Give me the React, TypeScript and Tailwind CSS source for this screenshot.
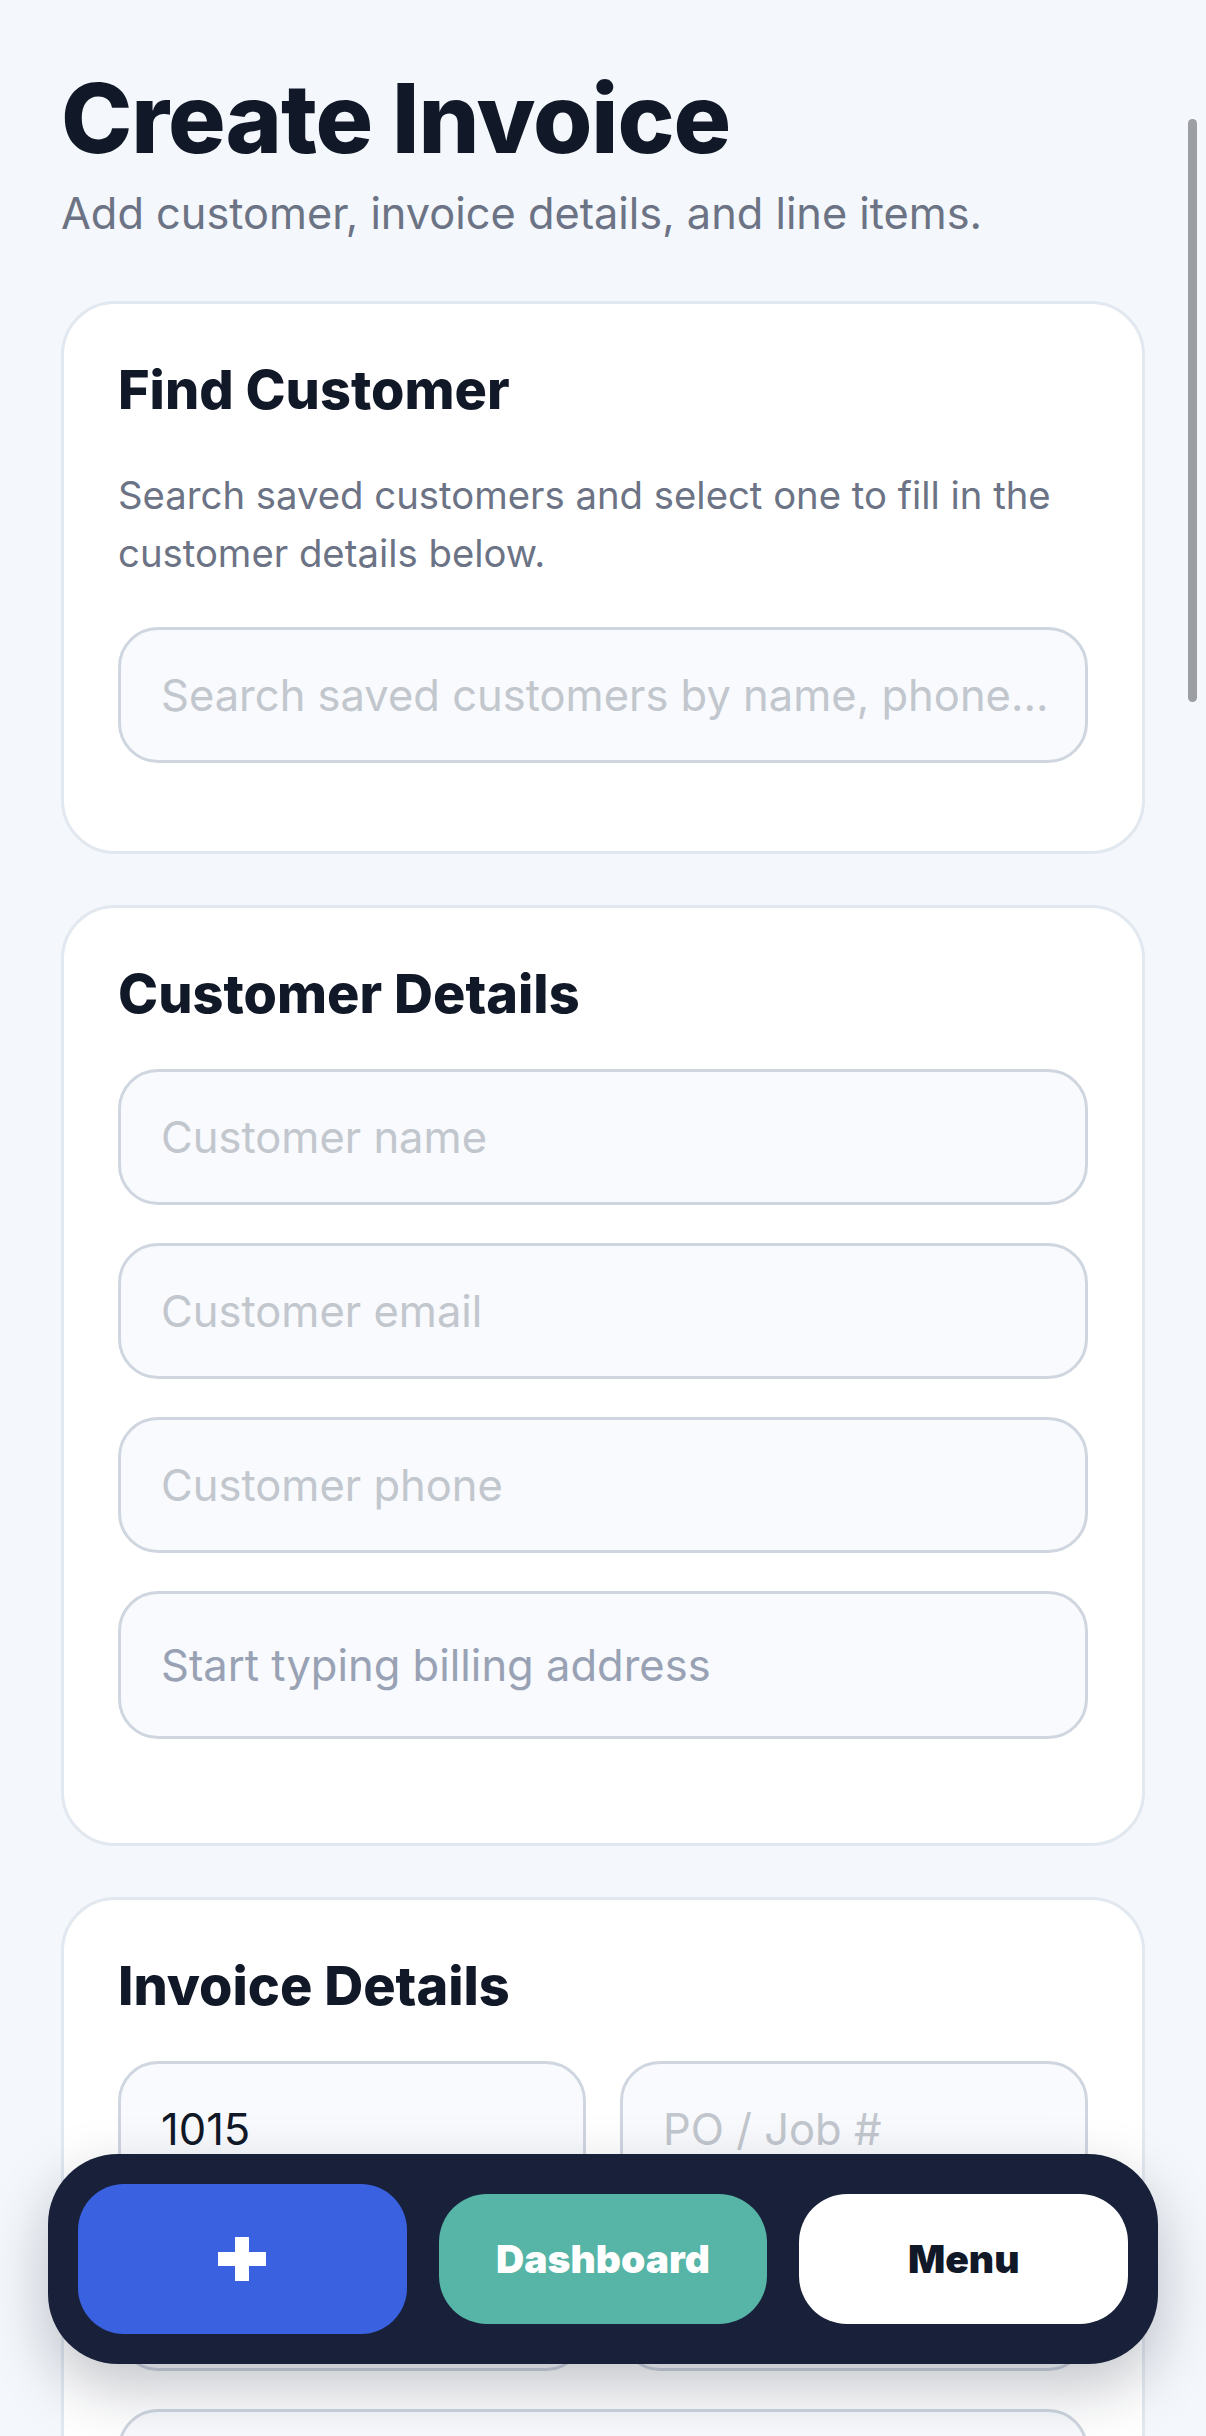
import React from "react";

type FieldProps = {
  placeholder?: string;
  value?: string;
  tall?: boolean;
  dark?: boolean;
};

const Field = ({ placeholder, value, tall, dark }: FieldProps) => (
  <input
    readOnly
    defaultValue={value}
    placeholder={placeholder}
    className={`block w-full ${tall ? "h-[148px]" : "h-[136px]"} rounded-[40px] border-[3px] border-[#cfd6e0] bg-[#f8fafd] pl-[40px] pr-[20px] text-[43.5px] text-[#111827] text-ellipsis outline-none ${
      dark ? "placeholder:text-[#99a2b4]" : "placeholder:text-[#c2c6cd]"
    }`}
  />
);

const Card = ({
  title,
  pb,
  children,
}: {
  title: string;
  pb: string;
  children: React.ReactNode;
}) => (
  <section
    className={`rounded-[54px] border-[3px] border-[#e2e8f0] bg-white px-[54px] pt-[54px] ${pb}`}
  >
    <h2 className="text-[54px] leading-[64px] font-extrabold text-[#111827]">
      {title}
    </h2>
    {children}
  </section>
);

const PlusIcon = () => (
  <svg width="48" height="44" viewBox="0 0 48 44" fill="#ffffff">
    <rect x="0" y="15" width="48" height="14" />
    <rect x="17" y="0" width="14" height="44" />
  </svg>
);

const BottomNav = () => (
  <nav className="absolute bottom-[72px] left-[48px] right-[48px] flex h-[210px] items-center gap-[32px] rounded-[70px] bg-[#19213a] px-[30px] shadow-[0_24px_60px_rgba(15,23,42,0.25)]">
    <button className="flex h-[150px] flex-1 items-center justify-center rounded-[46px] bg-[#3961e0]">
      <PlusIcon />
    </button>
    <button className="flex h-[130px] flex-1 items-center justify-center rounded-[48px] bg-[#56b5a6] text-[39px] font-black text-white">
      Dashboard
    </button>
    <button className="flex h-[130px] flex-1 items-center justify-center rounded-[48px] bg-white text-[39px] font-black text-[#111827]">
      Menu
    </button>
  </nav>
);

export default function App() {
  return (
    <div className="relative h-[2436px] overflow-hidden bg-[#f4f7fb] font-['Inter','Noto_Sans',sans-serif]">
      <main className="px-[61px] pt-[60px]">
        <h1 className="text-[96px] leading-[116px] font-extrabold tracking-[-0.011em] text-[#111827]">
          Create Invoice
        </h1>
        <p className="mt-[5px] text-[43.3px] leading-[64px] text-[#6b7385]">
          Add customer, invoice details, and line items.
        </p>

        <div className="mt-[56px] flex flex-col gap-[51px]">
          <Card title="Find Customer" pb="pb-[88px]">
            <p className="mt-[44px] text-[38.3px] leading-[58px] text-[#6b7385]">
              Search saved customers and select one to fill in the customer
              details below.
            </p>
            <div className="mt-[45px]">
              <Field placeholder="Search saved customers by name, phone..." />
            </div>
          </Card>

          <Card title="Customer Details" pb="pb-[104px]">
            <div className="mt-[43px] flex flex-col gap-[38px]">
              <Field placeholder="Customer name" />
              <Field placeholder="Customer email" />
              <Field placeholder="Customer phone" />
              <Field placeholder="Start typing billing address" tall dark />
            </div>
          </Card>

          <Card title="Invoice Details" pb="pb-[104px]">
            <div className="mt-[43px] grid grid-cols-2 gap-x-[34px] gap-y-[38px]">
              <Field value="1015" />
              <Field placeholder="PO / Job #" />
              <Field placeholder="Issue date" />
              <Field placeholder="Due date" />
              <div className="col-span-2">
                <Field placeholder="Payment terms" />
              </div>
            </div>
          </Card>
        </div>
      </main>

      <div className="absolute right-[9px] top-[119px] h-[583px] w-[9px] rounded-full bg-[#9d9ea3]" />

      <BottomNav />
    </div>
  );
}
